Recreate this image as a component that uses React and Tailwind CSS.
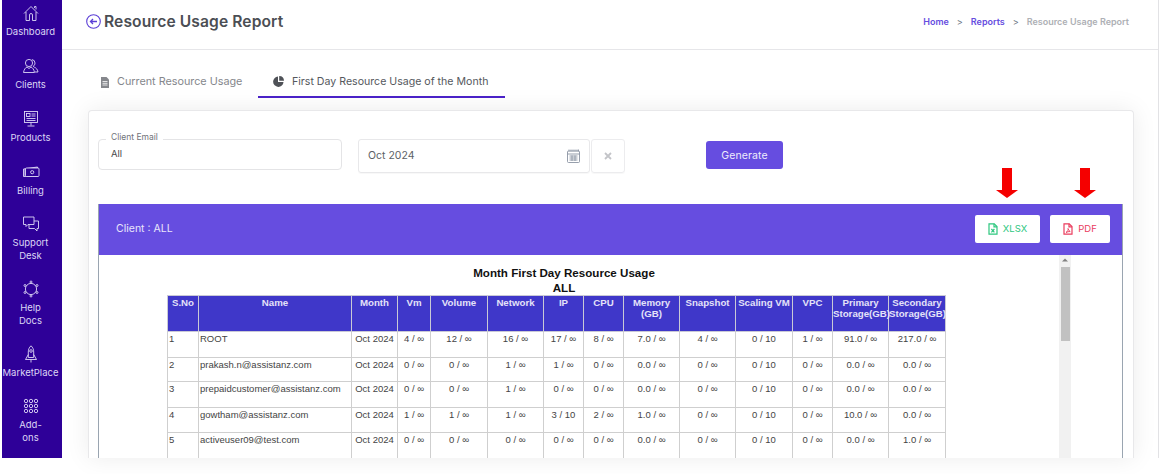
import React from "react";

const poppins = "font-['Inter',sans-serif]";

// sidebar icons, thin outline style
const icons = {
  home: (
    <>
      <path d="M2 9.500 9 2.500l7 7" />
      <path d="M4 8v8.500h3.500V11a1.500 1.500 0 0 1 3 0v5.500H14V8" />
      <path d="M12.500 4V2.500H14v3" />
    </>
  ),
  clients: (
    <>
      <circle cx="7" cy="6" r="3.600" />
      <path d="M1.500 15.500c.5-3 2-5 3.500-5.500l2 1.500 2-1.500c1.500.5 3 2.500 3.500 5.500z" />
      <path d="M10 2.600a3.500 3.500 0 0 1 3 3.400c0 1.500-.7 2.700-1.800 3.300l1.300 1c1.500.5 3 2 3.500 4.700h-3" />
    </>
  ),
  products: (
    <>
      <rect x="2.500" y="1.500" width="13" height="11" />
      <rect x="4.500" y="3.500" width="3.500" height="3" />
      <path d="M9.500 4h4M9.500 6h4M4.500 8.500h9M4.500 10.500h9M9 12.500v3M5.500 16h7" />
    </>
  ),
  billing: (
    <>
      <path d="M1.500 6 15.500 4v9.500h-14z" fill="currentColor" fillOpacity="0.5" />
      <rect x="3.500" y="5" width="13.500" height="8.500" rx="1" fill="#2e0098" />
      <circle cx="10.200" cy="9.200" r="1.600" />
    </>
  ),
  support: (
    <>
      <path d="M1.500 2h10.500v7.500H6l-2 2v-2H1.500z" />
      <path d="M12 6h4.500v7.500H15v2.500l-2.500-2.500H7v-4" />
    </>
  ),
  help: (
    <>
      <circle cx="9" cy="9" r="5.600" />
      <circle cx="9" cy="2" r="1" />
      <circle cx="15" cy="5.500" r="1" />
      <circle cx="15" cy="12.500" r="1" />
      <circle cx="9" cy="16" r="1" />
      <circle cx="3" cy="12.500" r="1" />
      <circle cx="3" cy="5.500" r="1" />
    </>
  ),
  rocket: (
    <>
      <path d="M9 .8c1.800 1.500 2.700 3.800 2.700 6.200v5.500H6.300V7C6.300 4.600 7.200 2.300 9 .8z" />
      <circle cx="9" cy="6" r="1.300" />
      <path d="M6.300 9.500 3.500 14.500h11L11.700 9.500M9 14.500v3" />
    </>
  ),
  addons: (
    <>
      {[4, 9, 14].map((cx) =>
        [4, 9, 14].map((cy) => <circle key={cx + "-" + cy} cx={cx} cy={cy} r="1.700" />)
      )}
    </>
  ),
};

const menu = [
  { icon: "home", lines: ["Dashboard"], cls: "h-[53px]" },
  { icon: "clients", lines: ["Clients"], cls: "h-[53px]" },
  { icon: "products", lines: ["Products"], cls: "h-[53px]" },
  { icon: "billing", lines: ["Billing"], cls: "h-[52px]" },
  { icon: "support", lines: ["Support", "Desk"], cls: "h-[65px]" },
  { icon: "help", lines: ["Help", "Docs"], cls: "h-[65px]" },
  { icon: "rocket", lines: ["MarketPlace"], cls: "h-[52px]" },
  { icon: "addons", lines: ["Add-", "ons"], cls: "h-[52px]" },
];

const rows = [
  ["1", "ROOT", "Oct 2024", "4 / ∞", "12 / ∞", "16 / ∞", "17 / ∞", "8 / ∞", "7.0 / ∞", "4 / ∞", "0 / 10", "1 / ∞", "91.0 / ∞", "217.0 / ∞"],
  ["2", "prakash.n@assistanz.com", "Oct 2024", "0 / ∞", "0 / ∞", "1 / ∞", "1 / ∞", "0 / ∞", "0.0 / ∞", "0 / ∞", "0 / 10", "0 / ∞", "0.0 / ∞", "0.0 / ∞"],
  ["3", "prepaidcustomer@assistanz.com", "Oct 2024", "0 / ∞", "0 / ∞", "1 / ∞", "0 / ∞", "0 / ∞", "0.0 / ∞", "0 / ∞", "0 / 10", "0 / ∞", "0.0 / ∞", "0.0 / ∞"],
  ["4", "gowtham@assistanz.com", "Oct 2024", "1 / ∞", "1 / ∞", "1 / ∞", "3 / 10", "2 / ∞", "1.0 / ∞", "0 / ∞", "0 / 10", "0 / ∞", "10.0 / ∞", "0.0 / ∞"],
  ["5", "activeuser09@test.com", "Oct 2024", "0 / ∞", "0 / ∞", "0 / ∞", "0 / ∞", "0 / ∞", "0.0 / ∞", "0 / ∞", "0 / 10", "0 / ∞", "0.0 / ∞", "1.0 / ∞"],
];

const columns = [
  { name: ["S.No"], w: "w-[31px]" },
  { name: ["Name"], w: "w-[153px]" },
  { name: ["Month"], w: "w-[46px]" },
  { name: ["Vm"], w: "w-[33px]" },
  { name: ["Volume"], w: "w-[57px]" },
  { name: ["Network"], w: "w-[56px]" },
  { name: ["IP"], w: "w-[40px]" },
  { name: ["CPU"], w: "w-[40px]" },
  { name: ["Memory", "(GB)"], w: "w-[56px]" },
  { name: ["Snapshot"], w: "w-[56px]" },
  { name: ["Scaling VM"], w: "w-[57px]" },
  { name: ["VPC"], w: "w-[40px]" },
  { name: ["Primary", "Storage(GB)"], w: "w-[56px]" },
  { name: ["Secondary", "Storage(GB)"], w: "w-[57px]" },
];

const rowHeights = ["h-[26px]", "h-[24px]", "h-[26px]", "h-[25px]", "h-[26px]"];

const RedArrow = ({ className }) => (
  <svg width="22" height="30" viewBox="0 0 22 30" className={`absolute top-[-47px] ${className}`}>
    <path d="M6 0h10v22h6L11 30 0 22h6z" fill="#f50000" />
  </svg>
);

const FileIcon = ({ label }) => (
  <svg width="10" height="12" viewBox="0 0 10 12" fill="none" stroke="currentColor" strokeWidth="1.2">
    <path d="M1 .8h5.200L9 3.600v7.600H1z" />
    <path d="M6 .8v3h3" />
    {label === "x" ? <path d="m3.400 6 3 3.400m0-3.400-3 3.400" /> : <path d="M3 9.500c1.500-1 2.500-2.500 2-4 .5 1.500 1.200 2.500 2.200 3-1.500 0-3 .3-4.200 1z" strokeWidth="0.9" />}
  </svg>
);

export default function App() {
  return (
    <div className={`h-[474px] w-[1164px] overflow-hidden bg-white ${poppins}`}>
      <div className="flex h-[458px] pl-[2px]">
        {/* sidebar */}
        <aside className="flex w-[60px] shrink-0 flex-col overflow-hidden bg-[#2e0098] pr-[3px] pt-[4px] text-[#dcd6f5]">
          {menu.map((m) => (
            <div key={m.icon} className={`flex shrink-0 flex-col items-center ${m.cls}`}>
              <svg width="18" height="18" viewBox="0 0 18 18" fill="none" stroke="currentColor" strokeWidth="0.9">
                {icons[m.icon]}
              </svg>
              <div className="mt-[3px] flex flex-col items-center">
                {m.lines.map((l) => (
                  <span key={l} className="whitespace-nowrap text-[9.5px] leading-[13px]">
                    {l}
                  </span>
                ))}
              </div>
            </div>
          ))}
        </aside>

        <main className="flex min-w-0 flex-1 flex-col bg-white">
          {/* top bar */}
          <header className="flex h-[50px] shrink-0 items-center justify-between border-b border-[#e6e6e9] bg-white pb-[6px] pl-[24px] pr-[29px]">
            <div className="flex items-center gap-[3px]">
              <svg width="15" height="15" viewBox="0 0 15 15" fill="none" stroke="#5b3fd6" strokeWidth="1.1">
                <circle cx="7.500" cy="7.500" r="6.800" />
                <path d="M11 7.500H4.500M7 5 4.500 7.500 7 10" strokeWidth="1.300" />
              </svg>
              <h1 className="text-[15.6px] font-semibold leading-none tracking-[0.1px] text-[#4b4e54]">Resource Usage Report</h1>
            </div>
            <nav className="flex items-center text-[9px] font-semibold text-[#664de0]">
              <span>Home</span>
              <span className="mx-[8px] font-normal text-gray-500">&gt;</span>
              <span>Reports</span>
              <span className="mx-[8px] font-normal text-gray-500">&gt;</span>
              <span className="text-[#aeb0b5]">Resource Usage Report</span>
            </nav>
          </header>

          {/* tabs */}
          <div className="flex h-[48px] shrink-0 items-end pl-[23px]">
            <div className="flex h-[36px] w-[173px] items-center gap-[7px] pl-[15px] pt-[5px] text-[10.8px] text-[#85878c]">
              <svg width="10" height="11" viewBox="0 0 10 11" fill="#85878c">
                <path d="M1 0h5.500L9 2.500V11H1z" />
                <path d="M2.500 4.500h5M2.500 6.300h5M2.500 8h5" stroke="#ffffff" strokeWidth="0.8" />
              </svg>
              Current Resource Usage
            </div>
            <div className="flex h-[36px] w-[247px] items-center gap-[8px] border-b-2 border-[#4a22c9] pl-[15px] pt-[5px] text-[10.6px] text-[#55585d]">
              <svg width="11" height="11" viewBox="0 0 11 11" fill="#4f5257">
                <path d="M5 .5V6h5.500A5.200 5.200 0 1 1 5 .5z" />
                <path d="M6.200 0A5 5 0 0 1 11 4.800H6.200z" />
              </svg>
              First Day Resource Usage of the Month
            </div>
          </div>

          {/* report card */}
          <section className="ml-[26px] mr-[24px] mt-[12px] flex min-h-0 flex-1 flex-col rounded-t-[4px] border border-b-0 border-[#e8e8ea] bg-white pl-[9px] pr-[10px] pt-[28px] shadow-[0_0_24px_rgba(0,0,0,0.08)]">
            <div className="flex h-[65px] shrink-0 items-start">
              <div className="relative h-[31px] w-[244px] rounded-[4px] border border-[#e4e4e6]">
                <span className="absolute left-[7px] top-[-8px] bg-white px-[5px] text-[8.5px] leading-[11px] text-[#70737a]">Client Email</span>
                <span className="absolute left-[12px] top-[8px] text-[9.5px] leading-[12px] text-[#4a4a4a]">All</span>
              </div>
              <div className="ml-[16px] flex h-[34px] w-[232px] items-center justify-between rounded-[3px] border border-[#e8e8ea] px-[9px] shadow-[0_1px_1px_rgba(0,0,0,0.03)]">
                <span className="text-[10.5px] text-[#5c5f66]">Oct 2024</span>
                <svg width="13" height="14" viewBox="0 0 13 14" fill="none" stroke="#8b94a3" strokeWidth="0.9">
                  <rect x="0.500" y="2" width="12" height="11.500" rx="1" />
                  <path d="M2 .5v2M4 .5v2M6 .5v2M8 .5v2M10 .5v2M11.500 .5v2M.5 5h12M2.500 7h8M2.500 9h8M2.500 11h8M5 6.500v5.500M8 6.500v5.500" />
                </svg>
              </div>
              <div className="ml-[1px] flex h-[34px] w-[34px] items-center justify-center rounded-[3px] border border-[#ececee] shadow-[0_1px_1px_rgba(0,0,0,0.03)]">
                <svg width="8" height="8" viewBox="0 0 8 8" stroke="#c3c4c8" strokeWidth="1.800">
                  <path d="m1 1 6 6M7 1 1 7" />
                </svg>
              </div>
              <button className="ml-[81px] mt-[2px] h-[28px] w-[77px] rounded-[3px] bg-[#664de0] pt-[1px] text-[10.5px] tracking-[0.1px] text-[#efecfc]">Generate</button>
            </div>

            {/* purple panel */}
            <div className="flex min-h-0 flex-1 flex-col border-x border-[#9aa5b1]">
              <div className="flex h-[51px] shrink-0 items-center justify-between bg-[#664de0] pb-[1px] pl-[17px] pr-[12px]">
                <span className="text-[10.5px] text-[#e9e5fb]">Client : ALL</span>
                <div className="flex items-center gap-[10px]">
                  <button className="relative flex h-[28px] w-[65px] items-center justify-center gap-[5px] rounded-[2px] bg-white text-[9.5px] text-[#2dc77f]">
                    <RedArrow className="left-[21px]" />
                    <FileIcon label="x" />
                    XLSX
                  </button>
                  <button className="relative flex h-[28px] w-[60px] items-center justify-center gap-[5px] rounded-[2px] bg-white text-[9.5px] text-[#ea3d5e]">
                    <RedArrow className="left-[24px]" />
                    <FileIcon label="p" />
                    PDF
                  </button>
                </div>
              </div>

              <div className="flex min-h-0 flex-1 overflow-hidden font-['Liberation_Sans',sans-serif]">
                <div className="w-[960px] shrink-0 pt-[10px]">
                  <div className="w-[930px] text-center text-[11.6px] font-bold leading-[15px] text-[#111]">
                    <div>Month First Day Resource Usage</div>
                    <div>ALL</div>
                  </div>
                  <table className="ml-[68px] w-[778px] table-fixed border-collapse text-[9.5px] text-[#444]">
                    <colgroup>
                      {columns.map((c) => (
                        <col key={c.name[0]} className={c.w} />
                      ))}
                    </colgroup>
                    <thead>
                      <tr className="h-[36px] bg-[#3f37c9]">
                        {columns.map((c) => (
                          <th key={c.name[0]} className="whitespace-nowrap border border-[#c9c9d6] p-0 pt-[1px] align-top text-[9.7px] font-bold leading-[11px] text-[#e4e2f8]">
                            {c.name.map((n) => (
                              <div key={n}>{n}</div>
                            ))}
                          </th>
                        ))}
                      </tr>
                    </thead>
                    <tbody>
                      {rows.map((r, i) => (
                        <tr key={r[0]} className={rowHeights[i]}>
                          {r.map((v, j) => (
                            <td key={j} className={`whitespace-nowrap border border-[#cfcfcf] px-px pt-0 align-top leading-[13px] ${j < 2 ? "text-left" : "text-center"}`}>
                              {v}
                            </td>
                          ))}
                        </tr>
                      ))}
                    </tbody>
                  </table>
                </div>
                {/* scrollbar */}
                <div className="flex w-[12px] shrink-0 flex-col items-center bg-[#f1f1f1]">
                  <svg width="8" height="12" viewBox="0 0 8 12" fill="#808080">
                    <path d="M4 3.500 7 6.500H1z" />
                  </svg>
                  <div className="h-[74px] w-[9px] bg-[#c1c1c1]" />
                </div>
              </div>
            </div>
          </section>
        </main>
        <div className="w-[6px] shrink-0 border-l border-[#e2e2e5] bg-white" />
      </div>
    </div>
  );
}
